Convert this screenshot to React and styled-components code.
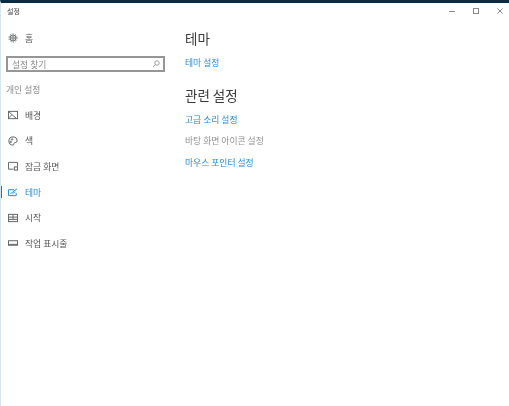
import React from "react";
import styled, { createGlobalStyle } from "styled-components";

const GlobalStyle = createGlobalStyle`
  html, body {
    margin: 0;
    padding: 0;
    background: #fff;
  }
  body {
    font-family: "Noto Sans CJK KR", "Noto Sans", sans-serif;
  }
`;

// the reference is a soft, upscaled capture, so the whole window gets a slight blur
const Window = styled.div`
  width: 509px;
  height: 406px;
  display: flex;
  flex-direction: column;
  box-sizing: border-box;
  border-top: 3px solid #0b2a44;
  border-left: 1px solid #d5e6ee;
  background: #fff;
  overflow: hidden;
  filter: blur(0.4px);
`;

const TitleBar = styled.div`
  height: 16px;
  flex: none;
  display: flex;
  align-items: center;
  justify-content: space-between;
`;

const TitleText = styled.span`
  margin-left: 6px;
  font-size: 7px;
  color: #444;
`;

const WindowButtons = styled.div`
  display: flex;
  align-items: center;
  gap: 6px;
`;

const WindowButton = styled.div`
  width: 18px;
  height: 16px;
  display: flex;
  align-items: center;
  justify-content: center;
  color: #888;
`;

const Body = styled.div`
  flex: 1;
  display: flex;
  padding-top: 9px;
`;

const Sidebar = styled.nav`
  width: 184px;
  flex: none;
  display: flex;
  flex-direction: column;
`;

const HomeRow = styled.div`
  height: 20px;
  display: flex;
  align-items: center;
  gap: 7px;
  padding-left: 7px;
  font-size: 8.8px;
  color: #555;
`;

const SearchBox = styled.div`
  margin: 8px 0 0 5px;
  width: 159px;
  height: 16px;
  box-sizing: border-box;
  border: 2px solid #969696;
  display: flex;
  align-items: center;
  justify-content: space-between;
  padding: 0 3px 0 4px;
  font-size: 8.8px;
  color: #8a8a8a;
`;

const GroupLabel = styled.div`
  margin: 11px 0 5.5px 5px;
  height: 14px;
  line-height: 14px;
  font-size: 8.8px;
  color: #8a8a8a;
`;

const NavList = styled.div`
  display: flex;
  flex-direction: column;
`;

const NavRow = styled.div`
  position: relative;
  height: 25.6px;
  display: flex;
  align-items: center;
  gap: 7px;
  padding-left: 7px;
  font-size: 8.8px;
  color: ${(p) => (p.$active ? "#2a8bdb" : "#555")};
  &::before {
    content: "";
    display: ${(p) => (p.$active ? "block" : "none")};
    position: absolute;
    left: -1px;
    top: 7px;
    width: 2px;
    height: 12px;
    background: #0078d7;
  }
`;

const Main = styled.main`
  flex: 1;
  display: flex;
  flex-direction: column;
  align-items: flex-start;
`;

const Heading = styled.h2`
  margin: ${(p) => (p.$first ? "0" : "15px")} 0 0 0;
  height: 20px;
  line-height: 20px;
  font-size: 13.5px;
  font-weight: 400;
  color: #3a3a3a;
`;

const SettingLink = styled.a`
  margin-top: ${(p) => p.$gap}px;
  height: 14px;
  line-height: 14px;
  font-size: 8.8px;
  color: ${(p) => (p.$muted ? "#929292" : "#2a8bdb")};
`;

const IconSvg = styled.svg`
  width: 10px;
  height: 10px;
  flex: none;
`;

const Icon = ({ children }) => (
  <IconSvg viewBox="0 0 11 11" fill="none" stroke="#666" strokeWidth="1.1">
    {children}
  </IconSvg>
);

const navItems = [
  {
    label: "배경",
    icon: (
      <>
        <rect x="0.5" y="1.5" width="10" height="8" />
        <path d="M1 2 L6 6.5 L9 9 M1 8.5 L4 5.5" />
      </>
    ),
  },
  {
    label: "색",
    icon: (
      <>
        <path d="M5.5 1 A4.5 4.5 0 1 0 5.5 10 C7 10 6 8 7 7.5 C8 7 10 7.5 10 5.5 A4.5 4.5 0 0 0 5.5 1 Z" />
        <circle cx="4.5" cy="3.8" r="0.8" />
        <circle cx="3" cy="6.5" r="0.8" />
      </>
    ),
  },
  {
    label: "잠금 화면",
    icon: (
      <>
        <path d="M6 9 H0.5 V1.5 H10.5 V6" />
        <rect x="7" y="6.5" width="3.5" height="3.5" />
      </>
    ),
  },
  {
    label: "테마",
    active: true,
    icon: (
      <g stroke="#2a8bdb">
        <path d="M6.5 3 H0.5 V9.5 H9 V6.5" />
        <path d="M3 7.5 L5 5.5 L10 2 M5 7.5 L8 5" />
      </g>
    ),
  },
  {
    label: "시작",
    icon: (
      <>
        <rect x="0.5" y="1.5" width="10" height="8" />
        <path d="M0.5 4.5 H10.5 M0.5 7 H10.5 M5.5 1.5 V7" />
      </>
    ),
  },
  {
    label: "작업 표시줄",
    icon: (
      <>
        <rect x="0.5" y="3" width="10" height="5" />
        <path d="M0.5 7 H10.5" />
      </>
    ),
  },
];

export default function App() {
  return (
    <>
      <GlobalStyle />
      <Window>
        <TitleBar>
          <TitleText>설정</TitleText>
          <WindowButtons>
            <WindowButton>
              <svg width="8" height="8" viewBox="0 0 8 8" stroke="currentColor">
                <path d="M1 4.5 H7" />
              </svg>
            </WindowButton>
            <WindowButton>
              <svg width="8" height="8" viewBox="0 0 8 8" fill="none" stroke="currentColor">
                <rect x="1.5" y="1.5" width="5" height="5" />
              </svg>
            </WindowButton>
            <WindowButton>
              <svg width="8" height="8" viewBox="0 0 8 8" stroke="currentColor">
                <path d="M1.5 1.5 L6.5 6.5 M6.5 1.5 L1.5 6.5" />
              </svg>
            </WindowButton>
          </WindowButtons>
        </TitleBar>
        <Body>
          <Sidebar>
            <HomeRow>
              <Icon>
                <circle cx="5.5" cy="5.5" r="4.4" strokeDasharray="1.4 1.4" />
                <circle cx="5.5" cy="5.5" r="3.2" />
                <circle cx="5.5" cy="5.5" r="1.4" />
              </Icon>
              홈
            </HomeRow>
            <SearchBox>
              설정 찾기
              <svg width="8" height="8" viewBox="0 0 8 8" fill="none" stroke="#888" strokeWidth="0.8">
                <circle cx="5" cy="3" r="2.2" />
                <path d="M3.4 4.6 L1 7" />
              </svg>
            </SearchBox>
            <GroupLabel>개인 설정</GroupLabel>
            <NavList>
              {navItems.map((item) => (
                <NavRow key={item.label} $active={item.active}>
                  <Icon>{item.icon}</Icon>
                  {item.label}
                </NavRow>
              ))}
            </NavList>
          </Sidebar>
          <Main>
            <Heading $first>테마</Heading>
            <SettingLink $gap={8}>테마 설정</SettingLink>
            <Heading>관련 설정</Heading>
            <SettingLink $gap={8}>고급 소리 설정</SettingLink>
            <SettingLink $gap={7} $muted>바탕 화면 아이콘 설정</SettingLink>
            <SettingLink $gap={7.5}>마우스 포인터 설정</SettingLink>
          </Main>
        </Body>
      </Window>
    </>
  );
}
